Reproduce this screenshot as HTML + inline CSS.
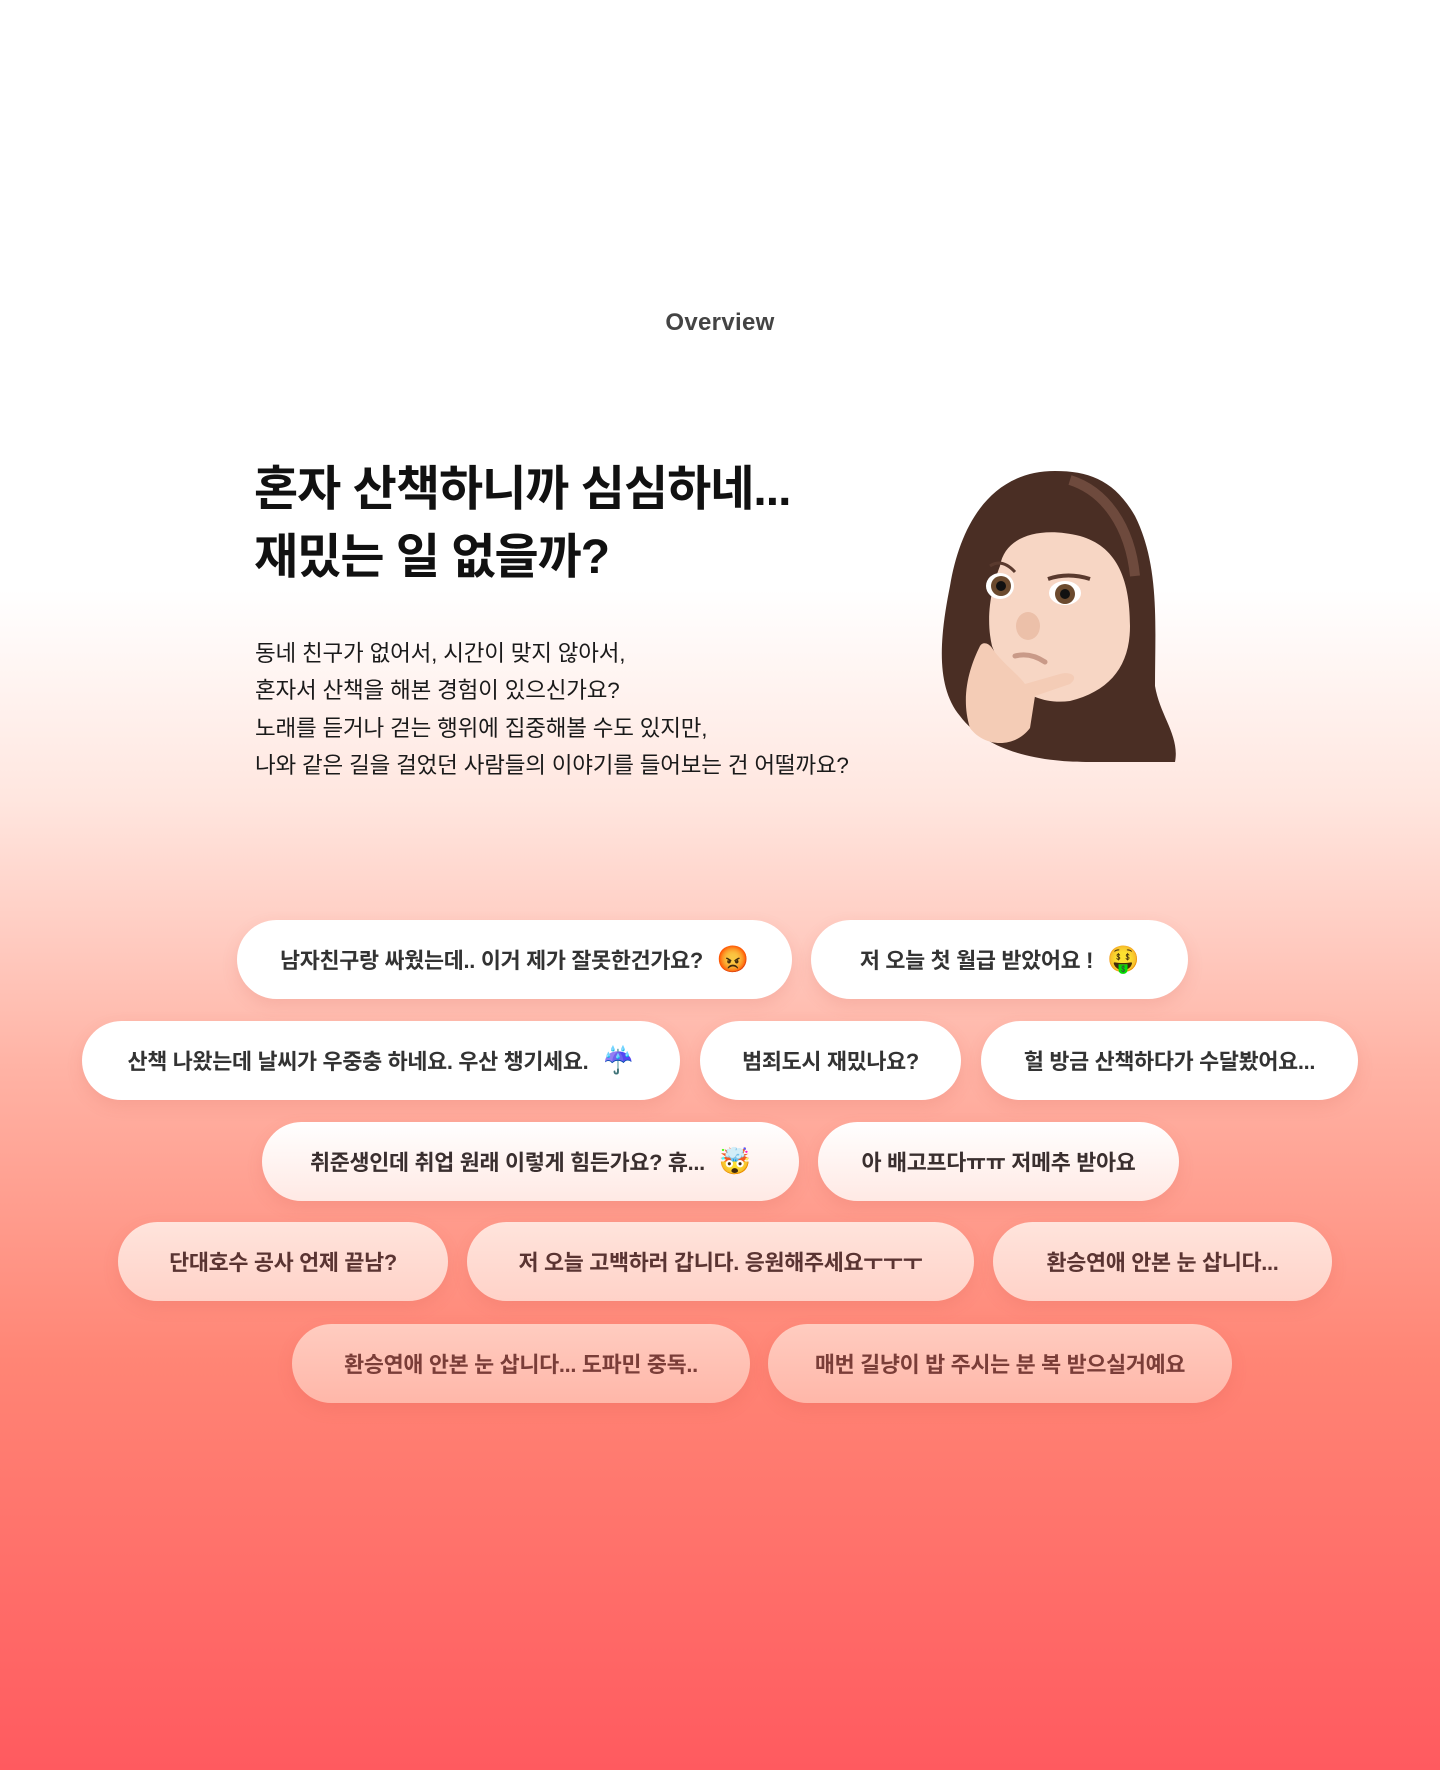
<!DOCTYPE html>
<html><head><meta charset="utf-8"><style>
*{margin:0;padding:0;box-sizing:border-box}
body{width:1440px;height:1770px;position:relative;overflow:hidden;font-family:"Liberation Sans","Noto Sans CJK KR",sans-serif;
background:linear-gradient(180deg,#fff 0px,#fff 590px,#ffe6df 800px,#ffb4a6 1060px,#ff8575 1360px,#ff5a5f 1770px)}
.ov{position:absolute;top:309px;left:0;width:1440px;text-align:center;font-size:24px;font-weight:700;color:#444;letter-spacing:.3px}
h1{position:absolute;left:254px;top:456px;font-size:48px;line-height:68px;font-weight:700;color:#111;letter-spacing:-1px}
.p{position:absolute;left:255px;top:635px;font-size:22.5px;line-height:37.3px;color:#1a1a1a;font-weight:400;letter-spacing:-.2px}
.pill{position:absolute;height:79px;border-radius:40px;display:flex;align-items:center;justify-content:center;font-size:21.8px;font-weight:700;color:#333;box-shadow:0 6px 16px rgba(200,80,70,.15);letter-spacing:-.3px;white-space:nowrap}
.e{font-size:26px;margin-left:14px}
.r1,.r2{background:#fff}
.r3{background:linear-gradient(#fff,#ffe9e4);color:#3a2f2f}
.r4{background:linear-gradient(#ffe4dc,#ffd2c8);color:#5a3432}
.r5{background:linear-gradient(#ffccc0,#ffb7a9);color:#7a3d38}
</style></head><body>
<div class="ov">Overview</div>
<h1>혼자 산책하니까 심심하네...<br>재밌는 일 없을까?</h1>
<div class="p">동네 친구가 없어서, 시간이 맞지 않아서,<br>혼자서 산책을 해본 경험이 있으신가요?<br>노래를 듣거나 걷는 행위에 집중해볼 수도 있지만,<br>나와 같은 길을 걸었던 사람들의 이야기를 들어보는 건 어떨까요?</div>
<svg style="position:absolute;left:930px;top:466px" width="250" height="300" viewBox="0 0 250 300">
<path d="M125 5C60 5 30 60 20 120C10 170 5 220 30 250C60 290 120 296 160 296L245 296C250 270 230 250 225 220C225 160 230 100 205 50C185 15 160 5 125 5Z" fill="#4a2e24"/>
<path d="M140 14C175 25 200 60 205 110" stroke="#6e4a3d" stroke-width="10" fill="none"/>
<path d="M70 100C75 70 110 60 150 70C185 80 200 110 200 160C200 200 180 225 140 235C100 240 75 215 62 180C55 150 62 120 70 100Z" fill="#f7d6c4"/>
<ellipse cx="70" cy="120" rx="14" ry="13" fill="#fff"/><circle cx="71" cy="120" r="10" fill="#6b4a2e"/><circle cx="71" cy="120" r="5" fill="#111"/>
<ellipse cx="135" cy="127" rx="16" ry="12" fill="#fff"/><circle cx="135" cy="128" r="10" fill="#6b4a2e"/><circle cx="135" cy="128" r="5" fill="#111"/>
<path d="M60 100Q72 92 85 106" stroke="#5a3a2e" stroke-width="3" fill="none"/><path d="M118 113Q138 106 160 113" stroke="#5a3a2e" stroke-width="4" fill="none"/>
<ellipse cx="98" cy="160" rx="12" ry="14" fill="#ecc0a9"/>
<path d="M85 190Q100 186 115 196" stroke="#c99a88" stroke-width="5" fill="none" stroke-linecap="round"/>
<path d="M50 180C40 200 30 230 40 262C55 282 85 282 100 262L105 230L140 218C150 210 140 205 130 208L95 218C90 210 70 195 62 182C58 176 52 176 50 180Z" fill="#f4ccb6"/>
</svg>
<div class="pill r1" style="left:237px;top:920px;width:555px">남자친구랑 싸웠는데.. 이거 제가 잘못한건가요? <span class="e">😡</span></div>
<div class="pill r1" style="left:811px;top:920px;width:377px">저 오늘 첫 월급 받았어요 ! <span class="e">🤑</span></div>
<div class="pill r2" style="left:82px;top:1021px;width:598px">산책 나왔는데 날씨가 우중충 하네요. 우산 챙기세요. <span class="e">☔</span></div>
<div class="pill r2" style="left:700px;top:1021px;width:261px">범죄도시 재밌나요?</div>
<div class="pill r2" style="left:981px;top:1021px;width:377px">헐 방금 산책하다가 수달봤어요...</div>
<div class="pill r3" style="left:262px;top:1122px;width:537px">취준생인데 취업 원래 이렇게 힘든가요? 휴... <span class="e">🤯</span></div>
<div class="pill r3" style="left:818px;top:1122px;width:361px">아 배고프다ㅠㅠ 저메추 받아요</div>
<div class="pill r4" style="left:118px;top:1222px;width:330px">단대호수 공사 언제 끝남?</div>
<div class="pill r4" style="left:467px;top:1222px;width:507px">저 오늘 고백하러 갑니다. 응원해주세요ㅜㅜㅜ</div>
<div class="pill r4" style="left:993px;top:1222px;width:339px">환승연애 안본 눈 삽니다...</div>
<div class="pill r5" style="left:292px;top:1324px;width:458px">환승연애 안본 눈 삽니다... 도파민 중독..</div>
<div class="pill r5" style="left:768px;top:1324px;width:464px">매번 길냥이 밥 주시는 분 복 받으실거예요</div>
</body></html>
